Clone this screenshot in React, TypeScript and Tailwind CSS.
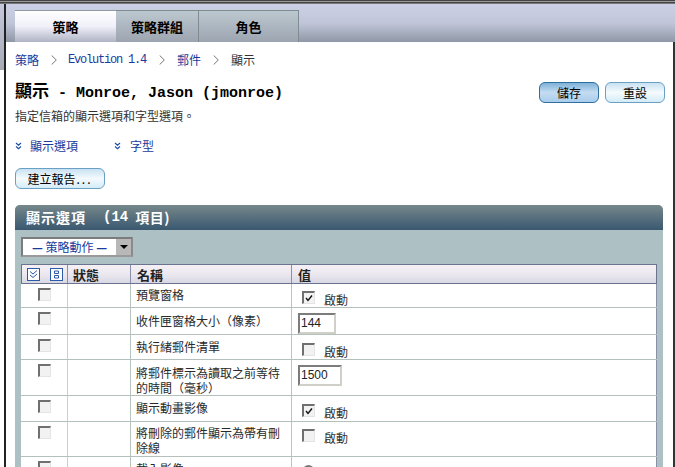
import React from "react";

const cjk = "font-['Noto_Sans_CJK_TC','Liberation_Sans',sans-serif]";

function Box({ checked }: { checked?: boolean }) {
  return (
    <span className="block w-[13px] h-[13px] border-t-2 border-l-2 border-t-[#707070] border-l-[#707070] bg-[#f2f2f2] border-r border-b border-r-[#e4e4e4] border-b-[#e4e4e4] relative">
      {checked && (
        <svg viewBox="0 0 10 10" className="absolute left-0 top-0 w-[10px] h-[10px]">
          <path d="M2 5 L4 7.5 L8 2.5" fill="none" stroke="#111" strokeWidth="1.4" />
        </svg>
      )}
    </span>
  );
}

function Toggle({ checked, top = "pt-[7px]" }: { checked?: boolean; top?: string }) {
  return (
    <div className={`flex items-start pl-[10px] ${top} gap-[9px]`}>
      <Box checked={checked} />
      <span className="text-[12px] leading-[14px] mt-[2px] text-[#333]">啟動</span>
    </div>
  );
}

function Field({ value, w }: { value: string; w: string }) {
  return (
    <div className="pl-[6px] pt-[5px]">
      <div className={`${w} h-[21px] border-2 border-t-[#7c7c7c] border-l-[#7c7c7c] border-r-[#d0d0c8] border-b-[#d0d0c8] bg-white text-[12px] leading-[16px] pl-[1px] text-[#222] font-['Liberation_Sans',sans-serif]`}>
        {value}
      </div>
    </div>
  );
}

function Row({ h, name, nameTop, children }: { h: string; name: React.ReactNode; nameTop: string; children?: React.ReactNode }) {
  return (
    <div className={`flex ${h} border-b border-b-[#b4c0bc] bg-white`}>
      <div className="w-[47px] shrink-0 border-r border-r-[#c4d4d0] pl-[17px] pt-[4px]">
        <Box />
      </div>
      <div className="w-[63px] shrink-0 border-r border-r-[#b8c4c0]" />
      <div className={`w-[161px] shrink-0 border-r border-r-[#b8c4c0] pl-[5px] pr-[2px] ${nameTop} text-[12px] leading-[15px] text-[#2a2a2a]`}>
        {name}
      </div>
      <div className="flex-1 border-r border-r-[#8a90a8]">{children}</div>
    </div>
  );
}

function Button({ children, primary, className }: { children: React.ReactNode; primary?: boolean; className?: string }) {
  return (
    <div
      className={`h-[21px] rounded-[6px] border flex items-center justify-center text-[12px] text-black ${
        primary
          ? "border-[#2f6f9f] bg-gradient-to-b from-[#7fb2d8] via-[#c4dcf2] to-[#a8cdec]"
          : "border-[#6aa0c4] bg-gradient-to-b from-[#c8e2f2] via-[#f4fafd] to-[#d4ecf8]"
      } ${className ?? ""}`}
    >
      {children}
    </div>
  );
}

function Chev() {
  return (
    <svg viewBox="0 0 7 8" className="w-[7px] h-[8px] shrink-0">
      <path d="M1 1 L3.5 3.2 L6 1 M1 4.5 L3.5 6.7 L6 4.5" fill="none" stroke="#1f4fa8" strokeWidth="1.2" />
    </svg>
  );
}

function Sep({ className }: { className: string }) {
  return (
    <svg viewBox="0 0 6 10" className={`w-[6px] h-[10px] ${className}`}>
      <path d="M0.7 0.5 L5.3 5 L0.7 9.5" fill="none" stroke="#666" strokeWidth="0.9" />
    </svg>
  );
}

export default function App() {
  return (
    <div className={`w-[675px] h-[467px] overflow-hidden bg-white ${cjk}`}>
      <div className="h-[3px] bg-[repeating-linear-gradient(180deg,#444_0,#444_1px,#999_1px,#999_2px)]" />
      <div className="h-[1px] bg-[#777]" />
      <div className="flex h-[463px]">
        <div className="w-[4px] bg-gradient-to-b from-[#c4c8dc] to-[#a8aab4] shrink-0 h-[66px]" />
        <div className="w-[2px] bg-[#222] shrink-0" />
        <div className="flex-1 min-w-0 flex flex-col">
          <div className="h-[38px] shrink-0 bg-gradient-to-b from-[#ccd0e6] via-[#c0c6d8] to-[#9098a8] flex items-end pl-[9px]">
            <div className="flex h-[32px] font-bold text-[13px] text-black">
              <div className="w-[101px] flex items-center justify-center bg-gradient-to-b from-[#ffffff] via-[#f0f0fa] to-[#b0b4c4] border-t border-t-[#909aa0]">
                策略
              </div>
              <div className="w-[83px] flex items-center justify-center bg-gradient-to-b from-[#bcc8d0] to-[#9ca4b0] border-t border-r border-[#7e8c90]">
                策略群組
              </div>
              <div className="w-[100px] flex items-center justify-center bg-gradient-to-b from-[#bcc8d0] to-[#9ca4b0] border-t border-r border-[#7e8c90]">
                角色
              </div>
            </div>
          </div>

          <div className="flex-1 min-h-0 pl-[9px] pr-[10px] border-r-2 border-r-[#333] relative">
            <div className="flex items-center h-[17px] mt-[9px] text-[12px] text-[#1a3a9c]">
              <span>策略</span>
              <Sep className="ml-[12px] mr-[11px]" />
              <span className="font-['Liberation_Mono',monospace] text-[12px] tracking-[-1.2px]">Evolution 1.4</span>
              <Sep className="ml-[13px] mr-[12px]" />
              <span>郵件</span>
              <Sep className="ml-[12px] mr-[12px]" />
              <span className="text-[#333]">顯示</span>
            </div>

            <div className="flex items-start justify-between mt-[12px]">
              <div>
                <div className="text-[17px] leading-[20px] font-bold text-black whitespace-pre">
                  顯示<span className="font-['Liberation_Mono',monospace] text-[15px]"> - Monroe, Jason (jmonroe)</span>
                </div>
                <div className="text-[12px] leading-[16px] mt-[4px] text-[#333]">指定信箱的顯示選項和字型選項。</div>
              </div>
              <div className="flex gap-[6px] mt-[2px] -mr-[2px]">
                <Button primary className="w-[60px]">儲存</Button>
                <Button className="w-[60px]">重設</Button>
              </div>
            </div>

            <div className="flex items-center h-[16px] mt-[14px] text-[12px] text-[#1a3a9c]">
              <Chev />
              <span className="ml-[8px] w-[84px]">顯示選項</span>
              <Chev />
              <span className="ml-[9px]">字型</span>
            </div>

            <Button className="w-[90px] mt-[14px]">
              建立報告<span className="tracking-[2px] pl-[1px]">...</span>
            </Button>

            <div className="mt-[16px] w-[648px] rounded-t-[5px] overflow-hidden bg-[#adc0c4]">
              <div className="h-[25px] bg-gradient-to-b from-[#76888a] to-[#3a5870] text-white text-[14px] font-bold flex items-center pl-[11px] whitespace-pre">
                <span className="tracking-[1px]">顯示選項</span>
                <span className="font-['Liberation_Mono',monospace] ml-[17px]">(14</span>
                <span className="ml-[7px] tracking-[0.5px]">項目)</span>
              </div>
              <div className="px-[6px] pb-[6px]">
                <div className="h-[34px] flex items-start pt-[7px]">
                  <div className="w-[112px] h-[20px] flex border-2 border-t-[#7c7c7c] border-l-[#7c7c7c] border-r-[#8a8a8a] border-b-[#9a9a9a] bg-white text-[12px] text-[#1a3a9c]">
                    <span className="flex-1 text-center leading-[16px] whitespace-pre">
                      <b>—</b> 策略動作 <b>—</b>
                    </span>
                    <span className="w-[15px] bg-[#b8b8b8] flex items-center justify-center">
                      <span className="w-0 h-0 border-l-[4px] border-r-[4px] border-t-[4px] border-l-transparent border-r-transparent border-t-black" />
                    </span>
                  </div>
                </div>
                <div className="h-[20px] flex border border-[#6a7490] bg-gradient-to-b from-[#f4f0f4] via-[#ece8f0] to-[#d8d8e4] text-[13px] font-bold text-[#222]">
                  <div className="w-[46px] shrink-0 border-r border-r-[#8a90a8] flex items-center gap-[10px] pl-[5px]">
                    <svg viewBox="0 0 13 13" className="w-[13px] h-[13px] shrink-0">
                      <rect x="0.5" y="0.5" width="12" height="12" fill="#fff" stroke="#2a5aa8" />
                      <path d="M3 3.5 L6 6 L10 2.5 M3 7 L6 9.5 L10 6" fill="none" stroke="#2a5aa8" />
                    </svg>
                    <svg viewBox="0 0 13 13" className="w-[13px] h-[13px] shrink-0">
                      <rect x="0.5" y="0.5" width="12" height="12" fill="#fff" stroke="#2a5aa8" />
                      <path d="M4.5 3 H8.5 V5.5 H4.5 Z M4.5 7.5 H8.5 V10 H4.5 Z" fill="none" stroke="#2a5aa8" />
                    </svg>
                  </div>
                  <div className="w-[63px] shrink-0 border-r border-r-[#8a90a8] pl-[5px] leading-[19px]">狀態</div>
                  <div className="w-[161px] shrink-0 border-r border-r-[#8a90a8] pl-[6px] leading-[19px]">名稱</div>
                  <div className="flex-1 pl-[6px] leading-[19px]">值</div>
                </div>
                <Row h="h-[24px]" name="預覽窗格" nameTop="pt-[3px]"><Toggle checked /></Row>
                <Row h="h-[27px]" name="收件匣窗格大小（像素）" nameTop="pt-[5px]"><Field value="144" w="w-[38px]" /></Row>
                <Row h="h-[25px]" name="執行緒郵件清單" nameTop="pt-[4px]"><Toggle top="pt-[8px]" /></Row>
                <Row h="h-[36px]" name="將郵件標示為讀取之前等待的時間（毫秒）" nameTop="pt-[5px]"><Field value="1500" w="w-[44px]" /></Row>
                <Row h="h-[26px]" name="顯示動畫影像" nameTop="pt-[4px]"><Toggle checked top="pt-[8px]" /></Row>
                <Row h="h-[35px]" name="將刪除的郵件顯示為帶有刪除線" nameTop="pt-[3px]"><Toggle /></Row>
                <Row h="h-[24px]" name="載入影像" nameTop="pt-[4px]">
                  <div className="pl-[11px] pt-[8px]">
                    <span className="block w-[11px] h-[11px] rounded-full border-2 border-[#777] bg-[#eee]" />
                  </div>
                </Row>
              </div>
            </div>
          </div>
        </div>
      </div>
    </div>
  );
}
